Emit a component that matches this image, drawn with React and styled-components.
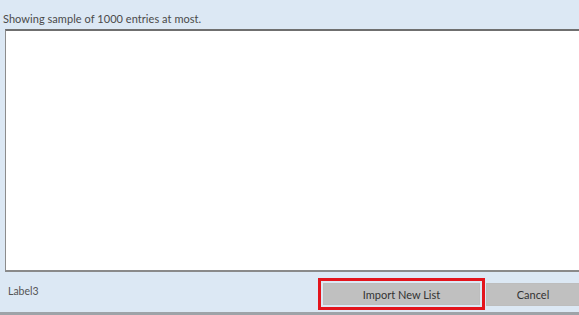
import React from 'react';
import styled, { createGlobalStyle } from 'styled-components';

const GlobalStyle = createGlobalStyle`
  html, body {
    margin: 0;
    padding: 0;
    background: #dce8f4;
  }
  body {
    font-family: 'Lato', 'DejaVu Sans', sans-serif;
  }
`;

const Window = styled.div`
  width: 579px;
  height: 315px;
  display: flex;
  flex-direction: column;
  background: #dce8f4;
  overflow: hidden;
`;

const Caption = styled.div`
  height: 29px;
  box-sizing: border-box;
  padding: 13px 0 0 3px;
  font-size: 11px;
  letter-spacing: 0.05px;
  color: #4a4a4a;
  line-height: 12px;
`;

const ListBox = styled.div`
  height: 243px;
  flex-shrink: 0;
  margin-left: 5px;
  margin-right: -20px;
  box-sizing: border-box;
  background: #ffffff;
  border: 1px solid #8c8c8c;
  border-top: 2px solid #6f6f6f;
  border-bottom: 2px solid #8a8a8a;
`;

const Footer = styled.div`
  height: 43px;
  flex-shrink: 0;
  display: flex;
  align-items: flex-end;
  padding: 0 0 2px 8px;
  border-bottom: 3px solid #9ea3a8;
  box-sizing: border-box;
`;

const Label = styled.span`
  flex: 1;
  align-self: center;
  font-size: 10.5px;
  color: #555;
`;

const FocusRing = styled.div`
  border: 3px solid #e3141c;
  padding: 2px;
  display: flex;
`;

const Button = styled.button`
  width: ${p => p.$width}px;
  height: ${p => p.$height}px;
  border: 1px solid #bdbdbd;
  background: #c0c0c0;
  font-family: inherit;
  font-size: 11px;
  color: #333;
  padding: 0;
  margin: 0;
  flex-shrink: 0;
`;

const CancelButton = styled(Button)`
  margin-left: 1px;
  margin-right: -1px;
  margin-bottom: 4px;
`;

const App = () => (
  <>
    <GlobalStyle />
    <Window>
      <Caption>Showing sample of 1000 entries at most.</Caption>
      <ListBox />
      <Footer>
        <Label>Label3</Label>
        <FocusRing>
          <Button $width={157} $height={22}>Import New List</Button>
        </FocusRing>
        <CancelButton $width={94} $height={23}>Cancel</CancelButton>
      </Footer>
    </Window>
  </>
);

export default App;
